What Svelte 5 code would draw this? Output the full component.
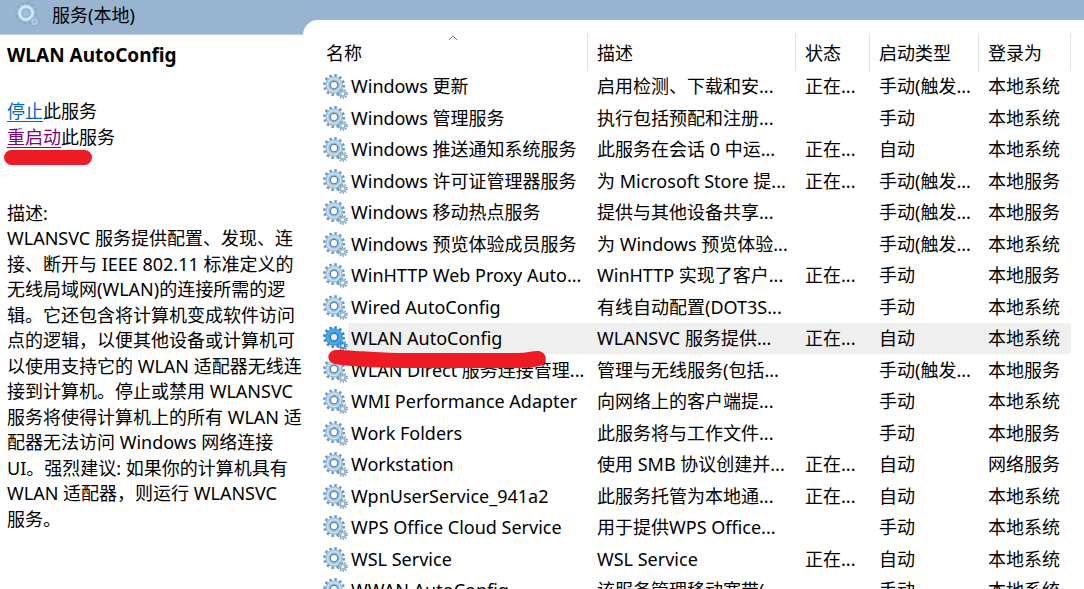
<script>
	const columns = ['名称', '描述', '状态', '启动类型', '登录为'];

	const RUNNING = '正在...';
	const AUTO = '自动';
	const MANUAL = '手动';
	const TRIGGER = '手动(触发...';
	const SYSTEM = '本地系统';
	const LOCAL = '本地服务';

	const services = [
		{ name: 'Windows 更新', description: '启用检测、下载和安...', status: RUNNING, startup: TRIGGER, logon: SYSTEM },
		{ name: 'Windows 管理服务', description: '执行包括预配和注册...', status: '', startup: MANUAL, logon: SYSTEM },
		{ name: 'Windows 推送通知系统服务', description: '此服务在会话 0 中运...', status: RUNNING, startup: AUTO, logon: SYSTEM },
		{ name: 'Windows 许可证管理器服务', description: '为 Microsoft Store 提...', status: RUNNING, startup: TRIGGER, logon: LOCAL },
		{ name: 'Windows 移动热点服务', description: '提供与其他设备共享...', status: '', startup: TRIGGER, logon: LOCAL },
		{ name: 'Windows 预览体验成员服务', description: '为 Windows 预览体验...', status: '', startup: TRIGGER, logon: SYSTEM },
		{ name: 'WinHTTP Web Proxy Auto...', description: 'WinHTTP 实现了客户...', status: RUNNING, startup: MANUAL, logon: LOCAL },
		{ name: 'Wired AutoConfig', description: '有线自动配置(DOT3S...', status: '', startup: MANUAL, logon: SYSTEM },
		{ name: 'WLAN AutoConfig', description: 'WLANSVC 服务提供...', status: RUNNING, startup: AUTO, logon: SYSTEM },
		{ name: 'WLAN Direct 服务连接管理...', description: '管理与无线服务(包括...', status: '', startup: TRIGGER, logon: LOCAL },
		{ name: 'WMI Performance Adapter', description: '向网络上的客户端提...', status: '', startup: MANUAL, logon: SYSTEM },
		{ name: 'Work Folders', description: '此服务将与工作文件...', status: '', startup: MANUAL, logon: LOCAL },
		{ name: 'Workstation', description: '使用 SMB 协议创建并...', status: RUNNING, startup: AUTO, logon: '网络服务' },
		{ name: 'WpnUserService_941a2', description: '此服务托管为本地通...', status: RUNNING, startup: AUTO, logon: SYSTEM },
		{ name: 'WPS Office Cloud Service', description: '用于提供WPS Office...', status: '', startup: MANUAL, logon: SYSTEM },
		{ name: 'WSL Service', description: 'WSL Service', status: RUNNING, startup: AUTO, logon: SYSTEM },
		{ name: 'WWAN AutoConfig', description: '该服务管理移动宽带(...', status: '', startup: MANUAL, logon: SYSTEM }
	];

	const descriptionLines = [
		'WLANSVC 服务提供配置、发现、连',
		'接、断开与 IEEE 802.11 标准定义的',
		'无线局域网(WLAN)的连接所需的逻',
		'辑。它还包含将计算机变成软件访问',
		'点的逻辑，以便其他设备或计算机可',
		'以使用支持它的 WLAN 适配器无线连',
		'接到计算机。停止或禁用 WLANSVC',
		'服务将使得计算机上的所有 WLAN 适',
		'配器无法访问 Windows 网络连接',
		'UI。强烈建议: 如果你的计算机具有',
		'WLAN 适配器，则运行 WLANSVC',
		'服务。'
	];

	let selected = $state('WLAN AutoConfig');
</script>

{#snippet gears(kind)}
	<svg class="gears {kind}" viewBox="0 0 26 26" aria-hidden="true">
		<circle class="teeth" cx="11.5" cy="11.5" r="10" stroke-width="2.8" stroke-dasharray="2.6 2.636" />
		<circle class="body" cx="11.5" cy="11.5" r="6.6" stroke-width="5" />
		<circle class="shine" cx="11.5" cy="11.5" r="6.8" stroke-width="2" />
		<circle class="hole" cx="11.5" cy="11.5" r="3.8" stroke-width="1.2" />
		<circle class="teeth" cx="20.5" cy="20.5" r="4.4" stroke-width="1.9" stroke-dasharray="1.4 1.365" />
		<circle class="body small" cx="20.5" cy="20.5" r="2.5" stroke-width="2" />
	</svg>
{/snippet}

<div class="window">
	<aside class="side">
		<header class="side-header">
			{@render gears('faded')}
			<span>服务(本地)</span>
		</header>
		<div class="details">
			<h1>WLAN AutoConfig</h1>
			<div class="actions">
				<p><a class="stop" href="#stop">停止</a>此服务</p>
				<p class="restart-row">
					<a class="restart" href="#restart">重启动</a>此服务
					<svg class="mark-short" viewBox="0 0 88 15" aria-hidden="true">
						<rect width="88" height="15" rx="7.5" fill="#ed1c24" />
					</svg>
				</p>
			</div>
			<div class="description">
				<span>描述:</span>
				{#each descriptionLines as line}
					<span>{line}</span>
				{/each}
			</div>
		</div>
	</aside>

	<main class="list">
		<table>
			<colgroup>
				<col />
				<col class="col-description" />
				<col class="col-status" />
				<col class="col-startup" />
				<col class="col-logon" />
			</colgroup>
			<thead>
				<tr>
					{#each columns as column, i}
						<th scope="col">
							<button type="button">
								{column}
								{#if i === 0}
									<svg class="sort" viewBox="0 0 10 6" aria-hidden="true">
										<path d="M1 5 L5 1 L9 5" fill="none" stroke="#777" />
									</svg>
								{/if}
							</button>
						</th>
					{/each}
				</tr>
			</thead>
			<tbody>
				{#each services as service (service.name)}
					<tr class:selected={service.name === selected} onclick={() => (selected = service.name)}>
						<td>
							<div class="name-cell">
								{@render gears(service.name === selected ? 'active' : 'normal')}
								<span class="name">{service.name}</span>
								{#if service.name === 'WLAN AutoConfig'}
									<svg class="mark-long" viewBox="0 0 218 20" aria-hidden="true">
										<path
											d="M8 1 C22 1 36 3 68 4 H190 C198 4 204 2 210 2 C220 3 220 15 212 17 C202 19 192 19 180 19 H70 C42 18 24 18 7 15 C-2 13 -2 2 8 1 Z"
											fill="#ed1c24"
										/>
									</svg>
								{/if}
							</div>
						</td>
						<td>{service.description}</td>
						<td>{service.status}</td>
						<td>{service.startup}</td>
						<td>{service.logon}</td>
					</tr>
				{/each}
			</tbody>
		</table>
	</main>
</div>

<style>
	:global(body) {
		margin: 0;
		background: #fff;
	}

	.window {
		display: flex;
		height: 100vh;
		overflow: hidden;
		background: #99b4d1;
		color: #000;
		font-family: 'Noto Sans', 'Noto Sans CJK SC', sans-serif;
		font-size: 18px;
		white-space: nowrap;
	}

	/* left pane */
	.side {
		flex: 0 0 303px;
		display: flex;
		flex-direction: column;
	}

	.side-header {
		display: flex;
		align-items: center;
		gap: 12px;
		height: 35px;
		padding: 0 15px 6px;
		box-sizing: border-box;
		border-bottom: 1px solid #b9cde2;
	}

	.details {
		flex: 1;
		padding: 7px 0 0 7px;
		background: #fff;
	}

	h1 {
		margin: 0 0 30px;
		font-size: 19px;
		line-height: 26px;
		font-weight: 700;
	}

	.actions p {
		margin: 0;
		line-height: 26px;
	}

	.stop {
		color: #0066cc;
	}

	.restart {
		color: #800080;
	}

	.stop,
	.restart {
		text-underline-offset: 3px;
		text-decoration-thickness: 1px;
	}

	.restart-row {
		position: relative;
	}

	.mark-short {
		position: absolute;
		left: -3px;
		top: 26px;
		width: 88px;
		height: 15px;
	}

	.description {
		display: flex;
		flex-direction: column;
		margin-top: 50px;
	}

	.description span {
		line-height: 26px;
	}

	.description span:nth-child(even) {
		line-height: 25px;
	}

	/* service list */
	.list {
		flex: 1;
		min-width: 0;
		margin-top: 20px;
		padding: 0 13px 0 16px;
		border-top-left-radius: 15px;
		background: #fff;
	}

	table {
		width: 100%;
		table-layout: fixed;
		border-collapse: collapse;
		cursor: default;
	}

	.col-description {
		width: 208px;
	}

	.col-status {
		width: 74px;
	}

	.col-startup {
		width: 109px;
	}

	.col-logon {
		width: 92px;
	}

	th {
		height: 51px;
		padding: 0;
		vertical-align: bottom;
	}

	th button {
		position: relative;
		display: block;
		width: 100%;
		height: 37px;
		padding: 0 0 2px 9px;
		border: 0;
		border-right: 1px solid #e2e2e2;
		background: none;
		color: inherit;
		font: inherit;
		font-weight: 400;
		text-align: left;
	}

	th:first-child button {
		padding-left: 7px;
	}

	.sort {
		position: absolute;
		top: 1px;
		left: 50%;
		width: 10px;
		height: 6px;
		margin-left: -5px;
	}

	td {
		height: 31px;
		padding: 0 0 0 9px;
		line-height: 31px;
	}

	tr:nth-child(even) td {
		height: 32px;
		line-height: 32px;
	}

	td:first-child {
		padding-left: 4px;
	}

	.name-cell {
		position: relative;
		display: flex;
		align-items: center;
	}

	.name {
		flex: 1;
		padding-left: 3px;
	}

	.selected td:not(:first-child),
	.selected .name {
		background: #efefef;
	}

	.mark-long {
		position: absolute;
		left: 5px;
		top: 26px;
		z-index: 1;
		width: 218px;
		height: 20px;
	}

	/* gear icons */
	.gears {
		flex: none;
		width: 25px;
		height: 25px;
		fill: none;
	}

	.gears .teeth {
		stroke: #7296b3;
	}

	.gears .body {
		stroke: #94bdd9;
	}

	.gears .shine {
		stroke: #c3dff0;
	}

	.gears .hole {
		fill: #fff;
		stroke: #5f819d;
	}

	.gears .small {
		stroke: #9bb9ce;
	}

	.active .teeth {
		stroke: #3387c9;
	}

	.active .body {
		stroke: #3b93d8;
	}

	.active .shine {
		stroke: #58aae6;
	}

	.active .hole {
		fill: #e6f3fc;
		stroke: #2a78b8;
	}

	.faded .teeth {
		stroke: #86a8c4;
	}

	.faded .body {
		stroke: #a9cbe2;
	}

	.faded .shine {
		stroke: #d9edf6;
	}

	.faded .hole {
		fill: #a3bfda;
		stroke: #8fb0cb;
	}
</style>
